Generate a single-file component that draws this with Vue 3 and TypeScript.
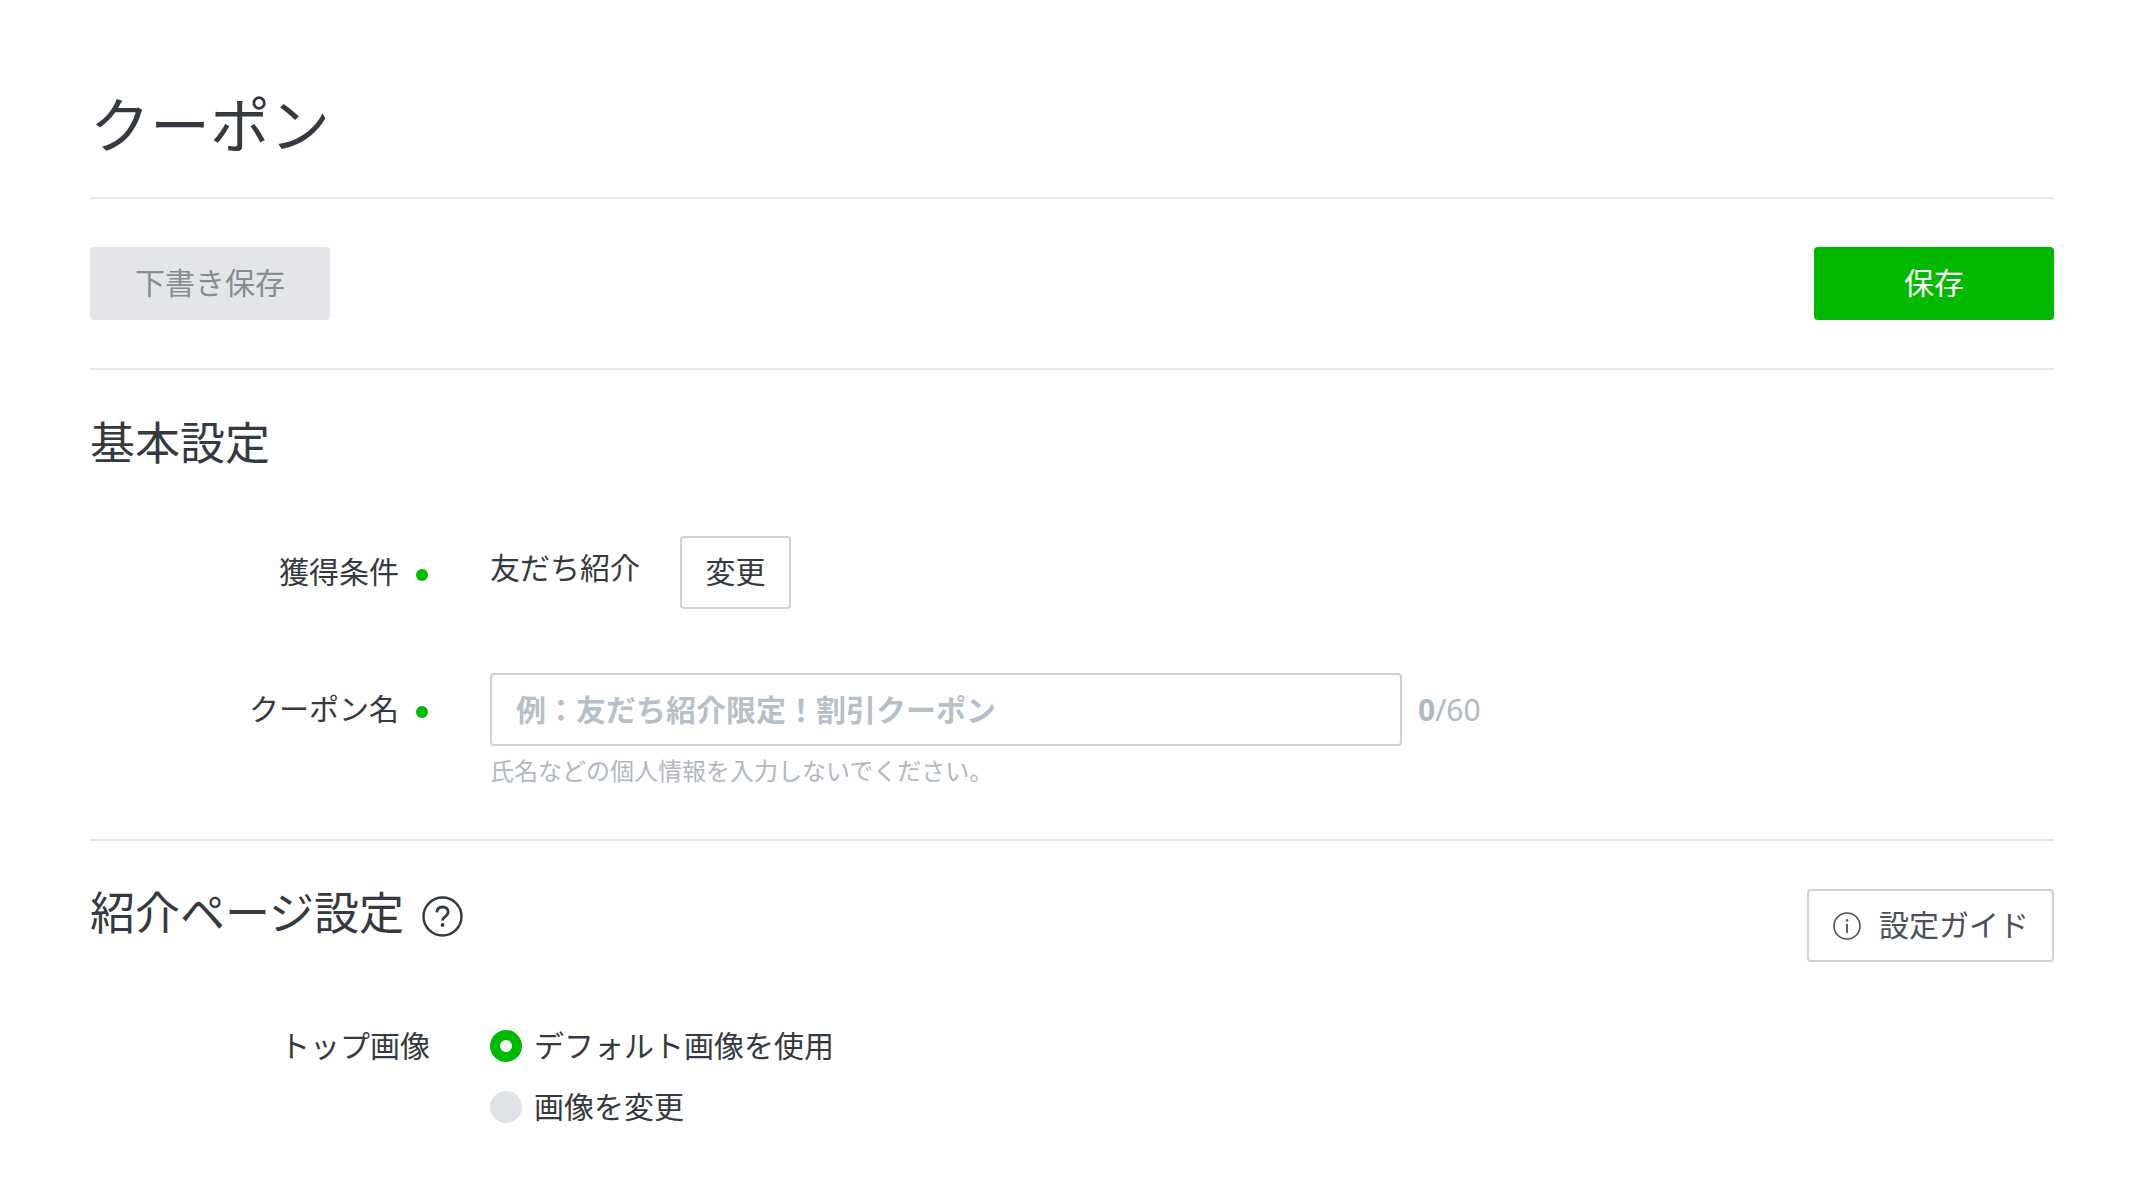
<script setup lang="ts">
const radios: { label: string; checked: boolean }[] = [
  { label: 'デフォルト画像を使用', checked: true },
  { label: '画像を変更', checked: false },
]
</script>

<template>
  <div class="page">
    <h1 class="title">クーポン</h1>

    <div class="toolbar">
      <button class="btn btn-draft" type="button">下書き保存</button>
      <button class="btn btn-save" type="button">保存</button>
    </div>

    <section class="section section-basic">
      <h2 class="heading">基本設定</h2>

      <div class="row row-first">
        <div class="label">獲得条件<span class="dot"></span></div>
        <div class="value">
          <span class="plain">友だち紹介</span>
          <button class="btn-outline btn-change" type="button">変更</button>
        </div>
      </div>

      <div class="row row-name">
        <div class="label label-name">クーポン名<span class="dot"></span></div>
        <div class="value-col">
          <div class="value">
            <input class="input" type="text" placeholder="例：友だち紹介限定！割引クーポン" />
            <span class="count"><b>0</b>/60</span>
          </div>
          <p class="hint">氏名などの個人情報を入力しないでください。</p>
        </div>
      </div>
    </section>

    <section class="section-intro">
      <div class="intro-head">
        <h2 class="heading heading-intro">
          紹介ページ設定
          <svg class="help" viewBox="0 0 41 41" fill="none" stroke="#343a40" stroke-width="2.4">
            <circle cx="20.5" cy="20.5" r="19" />
            <path d="M14.8 16.4c.2-3.4 2.5-5.4 5.8-5.4s5.6 1.9 5.6 4.9c0 4.4-5.6 4.4-5.6 8.6" stroke-width="2.8" />
            <circle cx="20.6" cy="29" r="1.9" fill="#343a40" stroke="none" />
          </svg>
        </h2>
        <button class="btn-outline btn-guide" type="button">
          <svg class="info" viewBox="0 0 28 28" fill="none" stroke="#4a5058" stroke-width="1.6">
            <circle cx="14" cy="14" r="13" />
            <path d="M14 12v9" stroke-width="1.8" />
            <circle cx="14" cy="8.2" r="1.2" fill="#4a5058" stroke="none" />
          </svg>
          <span class="guide-text">設定ガイド</span>
        </button>
      </div>

      <div class="row row-top">
        <div class="label label-top">トップ画像</div>
        <div class="radios">
          <label v-for="r in radios" :key="r.label" class="radio">
            <span class="radio-mark" :class="{ checked: r.checked }"></span>
            <span class="radio-text">{{ r.label }}</span>
          </label>
        </div>
      </div>
    </section>
  </div>
</template>

<style scoped>
.page {
  box-sizing: border-box;
  width: 2140px;
  height: 1184px;
  padding: 0 86px 0 90px;
  overflow: hidden;
  background: #fff;
  color: #343a40;
  font-family: "Noto Sans CJK JP", "Noto Sans", sans-serif;
  font-size: 30px;
}
.title {
  margin: 0;
  padding: 92px 0 45px;
  font-size: 60px;
  line-height: 60px;
  font-weight: 400;
  border-bottom: 2px solid #e6e7e9;
}
.toolbar {
  display: flex;
  justify-content: space-between;
  padding: 48px 0;
  border-bottom: 2px solid #e6e7e9;
}
.btn {
  width: 240px;
  height: 73px;
  border: none;
  border-radius: 4px;
  font: inherit;
  line-height: 1;
  padding: 0 0 5px;
}
.btn-draft {
  background: #e3e5e8;
  color: #868d94;
}
.btn-save {
  background: #00b900;
  color: #fff;
}
.section-basic {
  padding: 49px 0 52px;
  border-bottom: 2px solid #e6e7e9;
}
.heading {
  margin: 0;
  font-size: 45px;
  line-height: 44px;
  font-weight: 400;
}
.row {
  display: flex;
  align-items: flex-start;
  gap: 60px;
}
.row-first {
  margin-top: 73px;
}
.row-name {
  margin-top: 64px;
}
.label {
  box-sizing: border-box;
  display: flex;
  justify-content: flex-end;
  align-items: center;
  flex: 0 0 340px;
  height: 73px;
  padding: 0 0 5px;
  line-height: 1;
}
.dot {
  flex: none;
  width: 12px;
  height: 12px;
  margin: 10px 2px 0 17px;
  border-radius: 50%;
  background: #00b900;
}
.value {
  display: flex;
  align-items: center;
}
.plain {
  margin: 0 40px 13px 0;
  line-height: 1;
}
.btn-outline {
  box-sizing: border-box;
  height: 73px;
  background: #fff;
  border: 2px solid #ccd2d9;
  border-radius: 4px;
  font: inherit;
  color: #343a40;
  line-height: 1;
  padding: 0 0 5px;
}
.btn-change {
  width: 111px;
}
.input {
  box-sizing: border-box;
  width: 912px;
  height: 73px;
  padding: 0 24px 3px;
  border: 2px solid #ccd2d9;
  border-radius: 4px;
  font: inherit;
  font-weight: 700;
  line-height: 1;
  outline: none;
}
.input::placeholder {
  color: #b7bfc8;
  opacity: 1;
}
.count {
  margin-left: 16px;
  color: #b0b8c1;
  font-family: "Noto Sans", sans-serif;
  font-size: 30px;
  line-height: 1;
}
.hint {
  margin: 7px 0 0;
  font-size: 24px;
  line-height: 34px;
  color: #b0b7c0;
}
.intro-head {
  display: flex;
  justify-content: space-between;
  align-items: flex-start;
  padding-top: 48px;
}
.heading-intro {
  display: flex;
  align-items: flex-start;
  gap: 18px;
  margin-top: 0;
}
.help {
  width: 41px;
  height: 41px;
  margin-top: 7px;
}
.btn-guide {
  display: flex;
  align-items: center;
  justify-content: flex-start;
  width: 247px;
  padding: 0 0 0 24px;
  color: #4a5058;
  gap: 18px;
}
.guide-text {
  padding-bottom: 5px;
}
.info {
  width: 28px;
  height: 28px;
}
.row-top {
  margin-top: 68px;
}
.label-top {
  height: 32px;
}
.radios {
  display: flex;
  flex-direction: column;
  gap: 29px;
}
.radio {
  display: flex;
  align-items: center;
  gap: 12px;
  height: 32px;
  line-height: 1;
}
.radio-text {
  padding-bottom: 5px;
}
.radio-mark {
  box-sizing: border-box;
  flex: none;
  width: 32px;
  height: 32px;
  border-radius: 50%;
  background: #dfe2e7;
}
.radio-mark.checked {
  background: #fff;
  border: 10px solid #00b900;
}
</style>
